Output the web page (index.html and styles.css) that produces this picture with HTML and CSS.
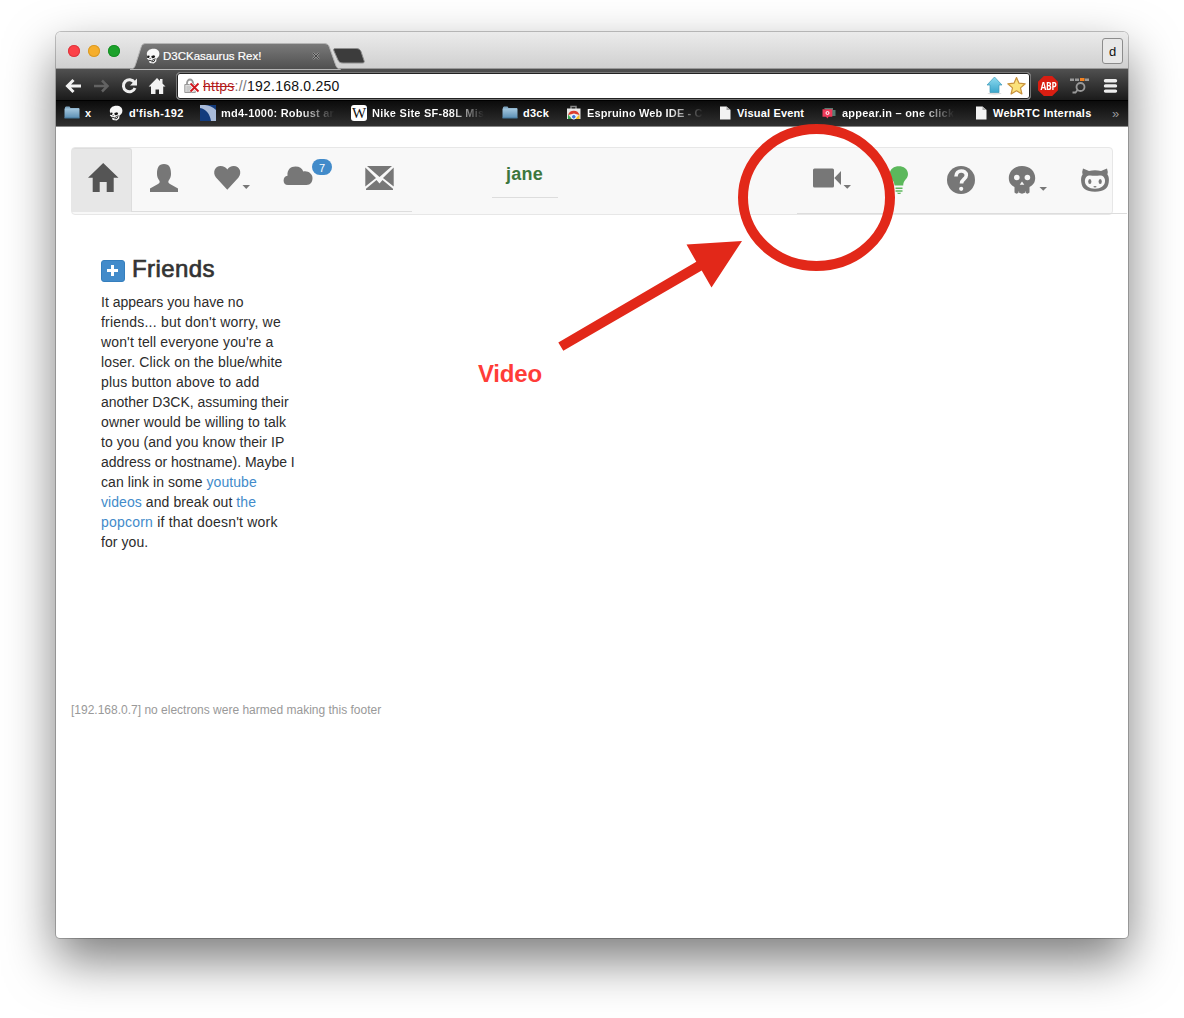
FILE: index.html
```html
<!DOCTYPE html>
<html lang="en">
<head>
<meta charset="utf-8">
<title>D3CKasaurus Rex!</title>
<link rel="stylesheet" href="styles.css">
</head>
<body>
<svg class="defs" width="0" height="0">
  <defs>
    <linearGradient id="folder-fill" x2="0" y2="1"><stop stop-color="#a5c8df"/><stop offset="1" stop-color="#5c8fb4"/></linearGradient>
    <linearGradient id="tab-fill" x2="0" y2="1"><stop stop-color="#7a7a7a"/><stop offset="1" stop-color="#4f4f4f"/></linearGradient>
    <linearGradient id="up-fill" x2="0" y2="1"><stop stop-color="#8fdcf0"/><stop offset="1" stop-color="#3ba6cc"/></linearGradient>
    <symbol id="folder" viewBox="0 0 16 16"><path d="M1 3V2.200L2 1.500h3.500l1 1.500H15V4H1z" fill="#7fa6c1"/><path d="M.5 3.500h15v9.500h-15z" fill="url(#folder-fill)"/><path d="M.5 13h15" stroke="#45789c"/></symbol>
    <symbol id="skull-mini" viewBox="0 0 14 16"><path d="M7.500.8c3.700 0 5.900 2 5.900 5 0 2.500-1.500 3.800-2.900 4.700l-.3 2.900-2.500 2-4-.4-1-2.900L.9 10.500l.3-2L.8 6C1 3 3.500.8 7.500.8z" fill="#f8f8f8"/><path d="M1.200 7.700l2-.2.500 1.300-1 1.300-1.500-.2zM5.300 8l2.700-.8 1.200 1-1 1.900-2.300.1zM4 9.800l.8 1.200-1.300.1z" fill="#181818"/><path d="M3 12.300l2.500.5 4-2.200M9 11.500l-1 2-2.500.3" fill="none" stroke="#222" stroke-width=".9"/></symbol>
    <symbol id="page" viewBox="0 0 12 14"><path d="M1 .5h6.500L11.500 4v9.500H1z" fill="#f3f3f3"/><path d="M7.500.5V4h4z" fill="#aaa"/></symbol>
  </defs>
</svg>
<main class="window">
  <header class="titlebar">
    <div class="lights"><i class="light red"></i><i class="light amber"></i><i class="light green"></i></div>
    <div class="tab">
      <svg class="tab-shape" width="240" height="27" viewBox="130 43 240 27"><path d="M130 69.500c4-1 4.500-2 5.500-5l5.500-17c1-3 2-4 5-4h178c3 0 4.500 1 5.500 4l6 17c1 3 2 4 5 5z" fill="url(#tab-fill)" stroke="#b5b5b5"/><path d="M335 48.500h21c3 0 4 1 5 3l3 9c.8 2-.2 2.500-2 2.500h-19c-3 0-4-1-5-3l-4-9c-.6-1.500-.5-2.500 1-2.500z" fill="#3c3c3c" stroke="#8e8e8e"/></svg>
      <svg class="tab-icon" width="14" height="16"><use href="#skull-mini"/></svg>
      <span class="tab-title">D3CKasaurus Rex!</span>
      <svg class="tab-close" width="8" height="8" viewBox="0 0 8 8"><path d="M1 1l6 6M7 1L1 7" stroke="#999" stroke-width="2"/><path d="M1 1l6 6M7 1L1 7" stroke="#444" stroke-width="1"/></svg>
    </div>
    <span class="profile">d</span>
  </header>
  <div class="toolbar">
    <svg width="120" height="32" viewBox="56 69 120 32">
      <g fill="none" stroke-width="3"><path d="M81 86H68M73.500 80L67.500 86l6 6" stroke="#f2f2f2"/><path d="M94 86h13M102 80.500l5.500 5.500-5.500 5.500" stroke="#626262" stroke-width="2.500"/><path d="M134.500 82.500a6 6 0 1 0 .5 5.500" stroke="#eee"/></g>
      <path d="M137 78.500v7h-7z" fill="#eee"/><path d="M157 78l3 3v-2h2.500v4.500l3 3h-2.300V94H159v-4.500h-3.500V94H151v-7.500h-2.300z" fill="#f2f2f2"/>
    </svg>
    <div class="address">
      <svg width="16" height="16" viewBox="0 0 16 16"><path d="M3 7V5a3 3.500 0 0 1 6 0v2" fill="none" stroke="#999" stroke-width="1.800"/><path d="M.8 6.500h10.500v8H.8z" fill="#ddd" stroke="#999"/><path d="M2.500 9h5M2.500 11h5M2.500 13h5" stroke="#b5b5b5"/><path d="M6.500 5.500l7.500 8M14 5.500l-7.500 8" stroke="#fff" stroke-width="3"/><path d="M6.500 5.500l8 8M14.500 5.500l-8 8" stroke="#cf161d" stroke-width="1.800"/></svg>
      <span class="url"><s>https</s><em>://</em>192.168.0.250</span>
      <svg class="marks" width="42" height="20" viewBox="986 76 42 20"><ellipse cx="994.500" cy="93.500" rx="7" ry="1.200" fill="#ddd"/><path d="M994.500 77l7.500 8h-3v7.500h-9V85h-3z" fill="url(#up-fill)" stroke="#3e9ab8" stroke-width=".7"/><path d="M1016.500 77.500l2.500 5.700 6.200.6-4.700 4.100 1.400 6.100-5.400-3.200-5.400 3.200 1.400-6.100-4.700-4.100 6.200-.6z" fill="#fbe27a" stroke="#c8913c" stroke-width="1.200" stroke-linejoin="round"/></svg>
    </div>
    <div class="abp"><span>ABP</span></div>
    <svg width="66" height="32" viewBox="1062 69 66 32"><path d="M1070 78.500h4v2.500h-4zM1075 78.500h4v2.500h-4zM1085 78.500h4v2.500h-4z" fill="#999"/><path d="M1080 78h4.500v3h-4.500z" fill="#f58220"/><circle cx="1080.500" cy="87" r="4" fill="none" stroke="#999" stroke-width="1.800"/><path d="M1077.500 90l-2 2.500h-3" fill="none" stroke="#999" stroke-width="1.800"/><path d="M1105.500 80.700h10M1105.500 85.900h10M1105.500 91.100h10" stroke="#eee" stroke-width="3.400" stroke-linecap="round"/></svg>
  </div>
  <nav class="bookmarks">
    <span><svg width="16" height="16"><use href="#folder"/></svg><b>x</b></span>
    <span><svg width="14" height="16"><use href="#skull-mini"/></svg><b class="b-fish">d'fish-192</b></span>
    <span><svg width="16" height="16" viewBox="0 0 16 16"><path d="M0 0h16v16H0z" fill="#a9bbd9"/><path d="M0 3c6 1 10 6 11 13H0zM5 0h11v5c-3-3-7-4.500-11-5z" fill="#123b7d"/></svg><b class="fade b-md">md4-1000: Robust ar</b></span>
    <span><span class="wiki">W</span><b class="fade b-nike">Nike Site SF-88L Mis</b></span>
    <span><svg width="16" height="16"><use href="#folder"/></svg><b class="b-deck">d3ck</b></span>
    <span><svg width="16" height="16" viewBox="0 0 16 16"><path d="M5 4V1.500h5V4" fill="none" stroke="#888" stroke-width="1.500"/><path d="M1 3.500h13.500V14H1z" fill="#e8e8e8"/><path d="M2 10a6 6 0 0 1 11.500 0L8 8.500z" fill="#dc3e2e"/><path d="M2 9.500L6 14H2z" fill="#38a852"/><path d="M13.500 9.500L9 14h4.500z" fill="#f4c323"/><circle cx="7.800" cy="11.800" r="2.300" fill="#3b78dc" stroke="#fff"/></svg><b class="fade b-esp">Espruino Web IDE - C</b></span>
    <span><svg width="12" height="14"><use href="#page"/></svg><b class="b-vis">Visual Event</b></span>
    <span><svg width="14" height="13" viewBox="0 0 14 13"><path d="M2 1h9v2h2.500v6H9z" fill="#587a71"/><path d="M.5 2.300h9.800v7.400H6.500L5.500 11.500 4 9.700H.5z" fill="#f03b5b"/><circle cx="5.500" cy="6" r="1.500" fill="none" stroke="#fff"/></svg><b class="fade b-app">appear.in – one click</b></span>
    <span><svg width="12" height="14"><use href="#page"/></svg><b class="b-rtc">WebRTC Internals</b></span>
    <span class="more">»</span>
  </nav>
  <section class="content">
    <div class="navbar">
      <div class="nav-left">
        <a class="active"><svg width="60" height="63" viewBox="72 148 60 63"><path d="M103.200 163l15.300 14.800h-4.800V192h-7v-10h-7v10h-7v-14.200H88l7.500-7.200z" fill="#555"/></svg></a>
        <svg width="280" height="63" viewBox="132 148 280 63" fill="#777">
          <path d="M150 192v-3.600l8-4.400q2.500-1.300 1.300-3.500c-1.500-2-2.300-4-2.300-6.500 0-6 1.500-10 7-10s7 4 7 10c0 2.500-.8 4.500-2.300 6.500q-1.200 2.200 1.300 3.500l8 4.400v3.600z"/>
          <path d="M227.300 189.700L216 177.500c-4-5.500-.8-11.500 4.500-11.500 3 0 5.500 1.200 6.800 3.500 1.500-2.300 3.500-3.500 6.500-3.500 5.500 0 8.700 6 4.700 11.500zM242.500 185h7.500l-3.750 4z"/>
          <path d="M288 185c-6 0-5.500-9-.5-9.300-.5-6 3-9.200 8-9.200 4 0 6.500 1.800 7.800 5 4.200-1.200 9.200 2 9.200 6.500 0 4-2 7-6 7z"/>
          <path d="M367 166h25l-12.500 11zM365.300 167.500L376 178l-10.700 8.500zM393.700 167.500L383 178l10.700 8.500zM366 190v-1.200l10.500-8.800 3 3.500 3-3.500 10.500 8.800v1.200z"/>
        </svg>
        <span class="badge">7</span>
      </div>
      <div class="user">jane</div>
      <div class="nav-right">
        <svg width="330" height="65" viewBox="797 148 330 65" fill="#777">
          <rect x="813" y="168.500" width="21" height="19" rx="1.500"/><path d="M834.300 178l6.700-7v14zM843.500 185h7.500l-3.750 3.800z"/>
          <path d="M894.500 185.500c0-5.500-4.800-6.500-4.800-11.500 0-10.500 18.300-10.500 18.300 0 0 5-4.800 6-4.800 11.500zM895.500 187.500h7v1.500h-7zM895.500 190.200h7v1.500h-7zM897 192.800h4.200l-1 1.200h-2.200z" fill="#5cb85c"/>
          <circle cx="961" cy="180" r="14"/><path d="M956 176.500c0-7.300 10.300-7 10.300-1.300 0 4-4.800 4-4.800 8.300" fill="none" stroke="#f8f8f8" stroke-width="3.600"/><circle cx="961.200" cy="188.800" r="2.100" fill="#f8f8f8"/>
          <path d="M1022 166c8 0 13.200 5.500 13.200 12 0 4.500-2.200 7.300-5.700 9v5.500l-1.800 1.200-2.700-1-3 1-3-1-2.700 1-1.800-1.200V187c-3.500-1.700-5.700-4.500-5.700-9 0-6.500 5.200-12 13.200-12z"/><circle cx="1016.800" cy="177.500" r="2.800" fill="#f8f8f8"/><circle cx="1027.400" cy="177.500" r="2.800" fill="#f8f8f8"/><path d="M1022 181.500l2.300 3.300h-4.600zM1018.500 191.500h.6v2h-.6zM1025 191.500h.6v2h-.6z" fill="#f8f8f8"/><path d="M1039.500 187h7.500l-3.750 3.800z"/>
          <path d="M1083 168.500l6 2.400q6-1.200 12 0l6-2.400q1.200 3 .4 6c1.500 2 1.800 4.500 1.300 8-.8 6-4.500 9.200-13.700 9.200s-12.900-3.200-13.700-9.200c-.5-3.500-.2-6 1.300-8q-.8-3 .4-6z"/><path d="M1089 175.500c2-.3 4 .2 6 .2s4-.5 6-.2c6 1 6.500 13.200-6 13.200s-12-12.200-6-13.200z" fill="#f8f8f8"/><ellipse cx="1089.800" cy="181.500" rx="1.600" ry="2.500"/><ellipse cx="1100.200" cy="181.500" rx="1.600" ry="2.500"/><ellipse cx="1095" cy="186.800" rx="1.600" ry=".8"/>
        </svg>
      </div>
    </div>
    <article class="friends">
      <h2><svg width="24" height="22" viewBox="0 0 24 22"><rect x=".5" y=".5" width="23" height="21" rx="2.500" fill="#428bca" stroke="#357ebd"/><path d="M10 5h3v4h4v3h-4v4h-3v-4H6V9h4z" fill="#fff"/></svg><span>Friends</span></h2>
      <p>It appears you have no<br><span class="loose">friends... but don't worry, we</span><br><span class="airy">won't tell everyone you're a</span><br><span class="airy">loser. Click on the blue/white</span><br><span class="loose">plus button above to add</span><br>another D3CK, assuming their<br><span class="airy">owner would be willing to talk</span><br><span class="slight">to you (and you know their IP</span><br>address or hostname). Maybe I<br><span class="slight">can link in some <a>youtube</a></span><br><span class="slight"><a>videos</a> and break out <a>the</a></span><br><span class="loose"><a>popcorn</a> if that doesn't work</span><br><span class="slight">for you.</span></p>
    </article>
    <footer>[192.168.0.7] no electrons were harmed making this footer</footer>
  </section>
</main>
<svg class="annotation" width="1184" height="1018"><ellipse cx="816.500" cy="197.500" rx="73.500" ry="68.500" fill="none" stroke="#e22819" stroke-width="10"/><path d="M558.300 342.500L696.300 261.800 686.500 244.500 742 241 711.500 287.500 701.700 270.500 563.300 350.800z" fill="#e22819"/></svg>
<div class="note">Video</div>
</body>
</html>
```

FILE: styles.css
```css
* { box-sizing: border-box; }
body { margin: 0; padding: 32px 56px; height: 1018px; overflow: hidden; background: #fff; font-family: "Liberation Sans", Arial, sans-serif; color: #2c2c2c; }
svg { display: block; flex: none; }
.defs { position: absolute; }
.window { width: 1072px; height: 906px; border-radius: 5px 5px 4px 4px; background: #fff; box-shadow: 0 0 0 1px rgba(0,0,0,.22), 0 22px 50px rgba(0,0,0,.52); }
.titlebar { height: 37px; display: flex; border-radius: 5px 5px 0 0; background: linear-gradient(#ebebeb, #d0d0d0); border-bottom: 1px solid #999; }
.lights { display: flex; gap: 8px; padding: 13px 0 0 12px; width: 74px; }
.light { width: 12px; height: 12px; border-radius: 50%; }
.red { background: #fc4148; box-shadow: inset 0 0 0 1px #dc3840; }
.amber { background: #f6ae2c; box-shadow: inset 0 0 0 1px #d99a28; }
.green { background: #1ca22b; box-shadow: inset 0 0 0 1px #188f26; }
.tab { display: grid; grid-template-columns: 16px 17px 149px 1fr; width: 240px; margin-top: 11px; height: 27px; }
.tab-shape { grid-area: 1 / 1 / 2 / 5; }
.tab-icon { grid-area: 1 / 2; margin-top: 5px; }
.tab-title { grid-area: 1 / 3; padding-top: 6px; font-size: 11.5px; line-height: 14px; color: #fff; -webkit-text-stroke: .2px; white-space: nowrap; }
.tab-close { grid-area: 1 / 4; margin-top: 9px; }
.profile { margin: 6px 5px 0 auto; width: 21px; height: 26px; border: 1px solid #8c8c8c; border-radius: 3px; background: #e8e8e8; text-align: center; font-size: 13px; line-height: 26px; color: #111; }
.toolbar { height: 32px; display: flex; background: linear-gradient(#505050, #1b1b1b); border-bottom: 1px solid #000; }
.address { width: 855px; height: 28px; margin-top: 3px; border: 1px solid #777; border-radius: 4px; background: #fff; box-shadow: inset 0 0 0 1px #222; display: flex; align-items: center; padding: 0 2px 2px 7px; }
.address svg, .url { margin-top: 1px; }
.url { margin-left: 3px; font-size: 14px; letter-spacing: .24px; color: #111; }
.url s { color: #b31b1b; }
.url em { color: #777; font-style: normal; }
.address .marks { margin-left: auto; }
.abp { margin: 7px 4px 0 7px; width: 20px; height: 20px; background: #d91e12; clip-path: polygon(29% 0, 71% 0, 100% 29%, 100% 71%, 71% 100%, 29% 100%, 0 71%, 0 29%); color: #fff; font: bold 10px/20px "Open Sans", sans-serif; display: flex; justify-content: center; letter-spacing: -.3px; }
.abp span { transform: scaleX(.84); }
.bookmarks { height: 26px; padding-left: 8px; display: grid; grid-template-columns: 45px 91px 151px 151px 64px 153px 103px 153px 137px 16px; background: linear-gradient(#0b0b0b, #303030); border-bottom: 1px solid #888; color: #fff; font-size: 11px; }
.bookmarks > span { display: flex; align-items: center; height: 24px; white-space: nowrap; }
.bookmarks b { margin-left: 5px; letter-spacing: .2px; }
.bookmarks .b-fish { margin-left: 6px; letter-spacing: .38px; }
.bookmarks .b-md { letter-spacing: .22px; }
.bookmarks .b-nike, .bookmarks .b-deck { letter-spacing: .25px; }
.bookmarks .b-esp { letter-spacing: .14px; }
.bookmarks .b-vis { margin-left: 6px; letter-spacing: .16px; }
.bookmarks .b-app { margin-left: 6px; letter-spacing: .22px; }
.bookmarks .b-rtc { margin-left: 6px; letter-spacing: .25px; }
.bookmarks .fade { background: linear-gradient(90deg, #fff 70%, #222 100%); background-clip: text; -webkit-background-clip: text; color: transparent; }
.wiki { width: 16px; height: 16px; border-radius: 3px; background: #fff; color: #111; font: 15px/16px "Liberation Serif", serif; display: flex; justify-content: center; }
.bookmarks .more { color: #999; font-size: 13px; }
.content { padding: 20px 15px 0; }
.navbar { height: 68px; width: 1042px; border: 1px solid #e7e7e7; border-radius: 4px; background: #f8f8f8; display: flex; }
.nav-left { flex: none; width: 340px; height: 64px; border-bottom: 1px solid #ddd; display: flex; position: relative; }
.active { width: 60px; height: 64px; background: #e7e7e7; border: 1px solid #ddd; border-width: 1px 1px 0 0; border-radius: 3px 3px 0 0; }
.active svg { margin-top: -1px; }
.badge { position: absolute; left: 240px; top: 11px; width: 20px; height: 16px; border-radius: 8px; background: #428bca; color: #fff; text-align: center; font-size: 11px; line-height: 18px; }
.user { flex: none; margin-left: 80px; width: 66px; height: 50px; padding: 15px 1px 0 0; border-bottom: 1px solid #ddd; text-align: center; color: #3c763d; font-weight: bold; font-size: 18px; letter-spacing: .2px; line-height: 22px; }
.nav-right { margin-left: 239px; flex: none; width: 330px; height: 66px; border-bottom: 1px solid #ddd; }
.friends { padding: 39px 30px 0; height: 485px; }
.friends h2 { display: flex; align-items: center; gap: 7px; margin: 0; height: 30px; font-size: 24px; font-weight: normal; letter-spacing: .4px; -webkit-text-stroke: .7px #333; color: #333; }
.friends h2 svg { margin-top: 3px; }
.friends p { margin: 8px 0 0; font-size: 14px; line-height: 20px; white-space: nowrap; }
.friends a { color: #428bca; }
.slight { letter-spacing: .07px; }
.airy { letter-spacing: .13px; }
.loose { letter-spacing: .21px; }
footer { font-size: 12px; line-height: 20px; color: #999; }
.annotation { position: absolute; left: 0; top: 0; }
.note { position: absolute; left: 478px; top: 360px; font-size: 24px; letter-spacing: -.2px; line-height: 28px; font-weight: bold; color: #ff3d38; }
```
